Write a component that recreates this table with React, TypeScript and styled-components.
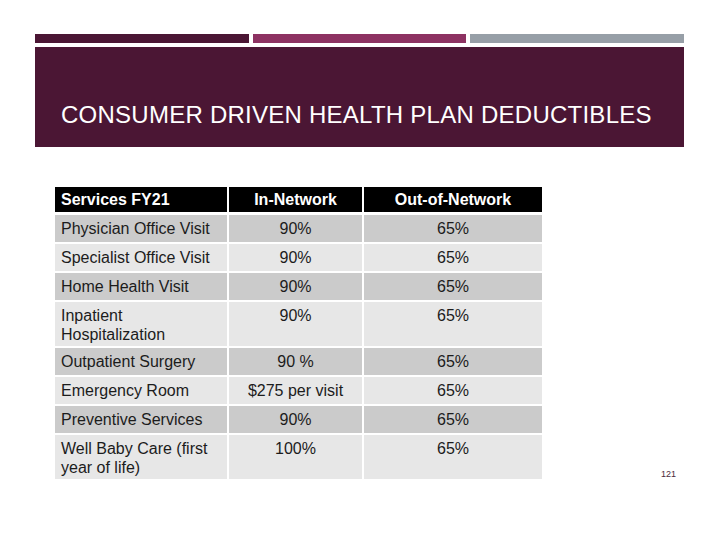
import React from "react";
import styled, { createGlobalStyle } from "styled-components";

const Global = createGlobalStyle`
  html, body { margin: 0; padding: 0; background: #ffffff; }
  body { font-family: "Liberation Sans", Arial, sans-serif; }
`;

const Slide = styled.div`
  width: 720px;
  height: 540px;
  box-sizing: border-box;
  padding: 34px 36px 0 35px;
  display: flex;
  flex-direction: column;
`;

const Bars = styled.div`
  display: grid;
  grid-template-columns: 214px 213px 214px;
  column-gap: 4px;
`;

const Bar = styled.div<{ $color: string }>`
  height: 9px;
  background: ${(p) => p.$color};
`;

const Banner = styled.div`
  margin-top: 4px;
  height: 100px;
  background: #4b1634;
  box-sizing: border-box;
  display: flex;
  align-items: flex-end;
  padding: 0 0 18px 26px;
`;

const Title = styled.h1`
  margin: 0;
  font-family: "Liberation Sans", Arial, sans-serif;
  font-weight: 400;
  font-size: 24px;
  letter-spacing: 0.25px;
  line-height: 28px;
  color: #ffffff;
  white-space: nowrap;
`;

const Body = styled.div`
  margin-top: 40px;
  padding-left: 20px;
  display: flex;
  align-items: flex-end;
  justify-content: space-between;
  padding-right: 8px;
`;

const Table = styled.div`
  display: grid;
  grid-template-columns: 172px 133px 178px;
  column-gap: 2px;
  row-gap: 2px;
`;

const HeadCell = styled.div<{ $left?: boolean }>`
  background: #000000;
  color: #ffffff;
  font-weight: 700;
  font-size: 16px;
  line-height: 20px;
  padding: 3px 6px 2px;
  margin-bottom: 1px;
  text-align: ${(p) => (p.$left ? "left" : "center")};
`;

const Cell = styled.div<{ $dark: boolean; $left?: boolean }>`
  box-sizing: border-box;
  min-height: 27px;
  background: ${(p) => (p.$dark ? "#cbcbcb" : "#e7e7e7")};
  color: #1c1c1c;
  font-size: 16px;
  line-height: 19px;
  padding: 4px 6px 2px;
  text-align: ${(p) => (p.$left ? "left" : "center")};
`;

const PageNum = styled.div`
  font-size: 9px;
  line-height: 10px;
  color: #4a2a3c;
  margin-bottom: 0px;
`;

const rows: [string, string, string][] = [
  ["Physician Office Visit", "90%", "65%"],
  ["Specialist Office Visit", "90%", "65%"],
  ["Home Health Visit", "90%", "65%"],
  ["Inpatient Hospitalization", "90%", "65%"],
  ["Outpatient Surgery", "90 %", "65%"],
  ["Emergency Room", "$275 per visit", "65%"],
  ["Preventive Services", "90%", "65%"],
  ["Well Baby Care (first year of life)", "100%", "65%"],
];

export default function App() {
  return (
    <>
      <Global />
      <Slide>
        <Bars>
          <Bar $color="#4b1634" />
          <Bar $color="#8d3262" />
          <Bar $color="#979fa7" />
        </Bars>
        <Banner>
          <Title>CONSUMER DRIVEN HEALTH PLAN DEDUCTIBLES</Title>
        </Banner>
        <Body>
          <Table>
            <HeadCell $left>Services FY21</HeadCell>
            <HeadCell>In-Network</HeadCell>
            <HeadCell>Out-of-Network</HeadCell>
            {rows.map((r, i) => {
              const dark = i % 2 === 0;
              return (
                <React.Fragment key={r[0]}>
                  <Cell $dark={dark} $left>
                    {r[0]}
                  </Cell>
                  <Cell $dark={dark}>{r[1]}</Cell>
                  <Cell $dark={dark}>{r[2]}</Cell>
                </React.Fragment>
              );
            })}
          </Table>
          <PageNum>121</PageNum>
        </Body>
      </Slide>
    </>
  );
}
